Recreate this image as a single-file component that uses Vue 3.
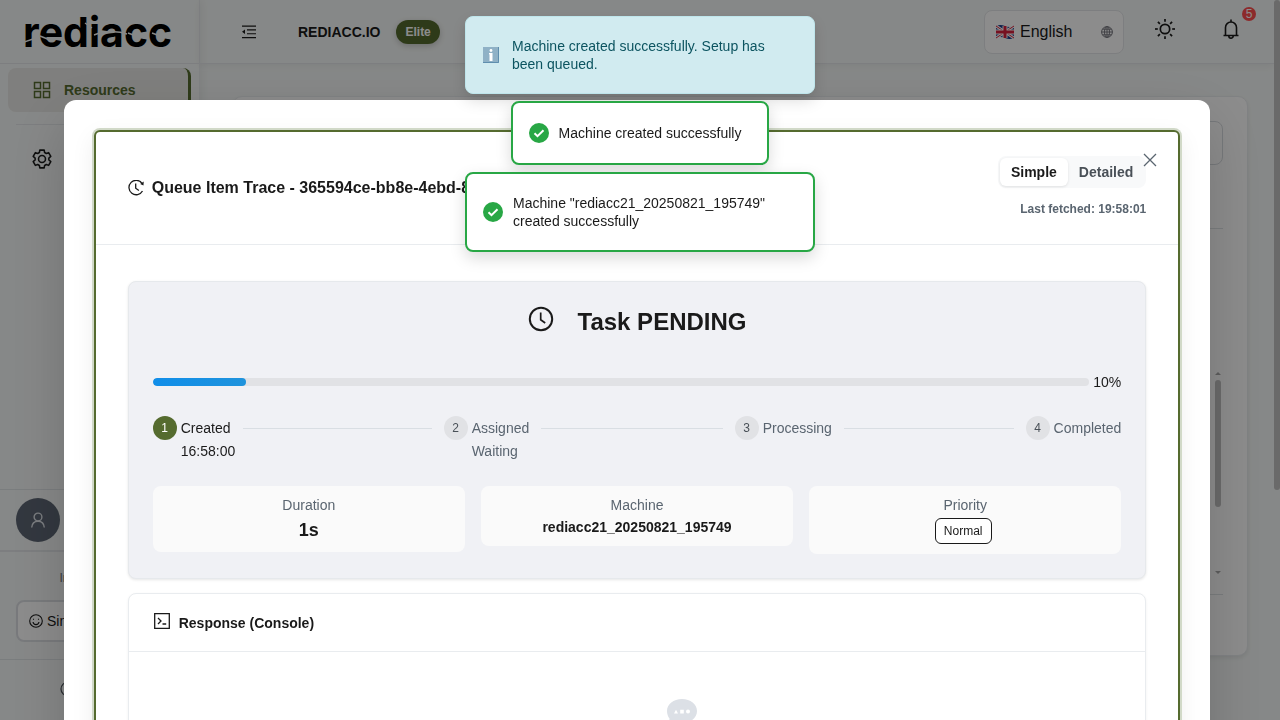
<script setup>
import { ref } from 'vue'

const view = ref('Simple')
const progress = 10
const steps = [
  { title: 'Created', note: '16:58:00', active: true },
  { title: 'Assigned', note: 'Waiting' },
  { title: 'Processing' },
  { title: 'Completed' },
]
const rays = [0, 45, 90, 135, 180, 225, 270, 315]
</script>

<template>
  <div class="shell">
    <aside class="sidebar">
      <div class="brand">
        <span class="wordmark">rediacc</span>
        <svg class="cuts" viewBox="0 0 152 34" width="152" height="34" aria-hidden="true">
          <path d="M-1 27l9-3M15 21l10 4M60 8l7 5M69 20l8-3M80 18q10-3 22 1M103 18l8 3M127 18l8 3" />
        </svg>
      </div>
      <nav class="nav">
        <a class="item current" href="#resources">
          <svg width="18" height="18" viewBox="0 0 18 18" fill="none" stroke="currentColor" stroke-width="1.5"><path d="M1.5 1.5h6v6h-6zM10.500 1.500h6v6h-6zM1.500 10.500h6v6h-6zM10.500 10.500h6v6h-6z" /></svg>
          <span>Resources</span>
        </a>
        <hr />
        <a class="item" href="#settings" aria-label="Settings">
          <svg width="22" height="22" viewBox="0 0 24 24" fill="none" stroke="currentColor" stroke-width="1.7" stroke-linejoin="round"><path d="M9.600 2.300H14.400L14.850 4.950L16.700 6L19.200 5.050L21.600 9.240L19.500 10.940V13.060L21.600 14.760L19.200 18.950L16.700 18L14.850 19.050L14.400 21.700H9.600L9.150 19.050L7.300 18L4.800 18.950L2.400 14.760L4.500 13.060V10.940L2.400 9.240L4.800 5.050L7.300 6L9.150 4.950Z" /><circle cx="12" cy="12" r="3.800" /></svg>
        </a>
      </nav>
      <div class="account">
        <span class="avatar">
          <svg width="18" height="18" viewBox="0 0 18 18" fill="none" stroke="currentColor" stroke-width="1.400"><circle cx="9" cy="6" r="3.900" /><path d="M2.700 16.500c.3-3.700 2.800-6.200 6.300-6.200s6 2.500 6.300 6.200" /></svg>
        </span>
      </div>
      <div class="mode">
        <span class="mode-label">Interface Mode</span>
        <button class="mode-button" type="button">
          <svg width="14" height="14" viewBox="0 0 14 14" fill="none" stroke="currentColor" stroke-width="1.100"><circle cx="7" cy="7" r="6.300" /><path d="M4 8c.5 3.500 5.500 3.500 6 0M4.500 4.800v1M9.500 4.800v1" /></svg>
          Simple
        </button>
      </div>
      <div class="help">
        <svg width="16" height="16" viewBox="0 0 16 16" fill="none" stroke="currentColor" stroke-width="1.200"><circle cx="8" cy="8" r="7" /></svg>
      </div>
    </aside>

    <div class="main">
      <header class="topbar">
        <button class="bare fold" type="button" aria-label="Collapse menu">
          <svg width="16" height="14" viewBox="0 0 16 14"><path d="M1 0.500h14v1.200H1zM6 4.300h9v1.100H6zM6 8.200h9v1.100H6zM1 12h14v1.200H1zM4 4.600v4.400L1 6.800z" fill="currentColor" /></svg>
        </button>
        <strong class="org">REDIACC.IO</strong>
        <span class="plan">Elite</span>
        <label class="language">
          <svg width="20" height="16" viewBox="0 0 20 16" aria-hidden="true">
            <path d="M1 2q4-2 9 0t9 0v12q-4 2-9 0t-9 0z" fill="#1d3b8b" />
            <path d="M1 2l18 12M19 2L1 14" stroke="#fff" stroke-width="3" />
            <path d="M1 2l18 12M19 2L1 14" stroke="#d8203c" stroke-width="1" />
            <path d="M10 2v12M1 8h18" stroke="#fff" stroke-width="5" />
            <path d="M10 2v12M1 8h18" stroke="#d8203c" stroke-width="3" />
          </svg>
          <select aria-label="Language"><option>English</option></select>
          <svg width="12" height="12" viewBox="0 0 12 12" fill="none" stroke="#77777f" stroke-width="1"><circle cx="6" cy="6" r="5.400" /><ellipse cx="6" cy="6" rx="2.500" ry="5.400" /><path d="M.6 6h10.800M1.500 3.200h9M1.500 8.800h9M6 .6v10.800" /></svg>
        </label>
        <button class="bare sun" type="button" aria-label="Toggle theme">
          <svg width="20" height="20" viewBox="0 0 20 20" fill="none" stroke="currentColor" stroke-width="1.700"><circle cx="10" cy="10" r="4.700" /><path v-for="r in rays" :key="r" d="M10 0v2.800" :transform="`rotate(${r} 10 10)`" /></svg>
        </button>
        <button class="bare bell" type="button" aria-label="Notifications">
          <svg width="18" height="20" viewBox="0 0 18 20" fill="none" stroke="currentColor" stroke-width="1.600"><path d="M1.500 16.500h15M3.500 16.500V8.500a5.500 5.500 0 0 1 11 0v8M9 .5V3M6.800 17a2.200 2.200 0 0 0 4.400 0" /></svg>
          <span class="badge">5</span>
        </button>
      </header>
      <main class="content">
        <section class="board">
          <div class="field"></div>
          <div class="rule"></div>
          <div class="list"><span class="arrow up"></span><span class="thumb"></span><span class="arrow down"></span></div>
        </section>
      </main>
    </div>
    <div class="page-scroll"><span></span></div>
  </div>

  <div class="mask">
    <div class="modal" role="dialog" aria-modal="true" aria-labelledby="trace-title">
      <div class="panel">
        <header class="panel-head">
          <svg class="trace-icon" width="16" height="16" viewBox="0 0 16 16" fill="none" stroke="currentColor" stroke-width="1.300"><path d="M14 3.300A7.200 7.200 0 1 0 14.500 11M7.700 3.500v4.700l3.200 2.300" /><path d="M15.700 1.500l-.2 4-3.300-1.500z" fill="currentColor" stroke="none" /></svg>
          <h1 id="trace-title">Queue Item Trace - 365594ce-bb8e-4ebd-8</h1>
          <div class="head-right">
            <div class="segmented" role="radiogroup" aria-label="View">
              <label v-for="v in ['Simple', 'Detailed']" :key="v" :class="{ on: view === v }">
                <input v-model="view" type="radio" name="view" :value="v" />{{ v }}
              </label>
            </div>
            <span class="fetched">Last fetched: 19:58:01</span>
          </div>
          <button class="close" type="button" aria-label="Close">
            <svg width="14" height="14" viewBox="0 0 14 14" fill="none" stroke="currentColor" stroke-width="1.300"><path d="M1 1l12 12M13 1L1 13" /></svg>
          </button>
        </header>

        <div class="panel-body">
          <section class="summary">
            <h2>
              <svg width="26" height="26" viewBox="0 0 26 26" fill="none" stroke="currentColor" stroke-width="2"><circle cx="13" cy="13" r="11.200" /><path d="M12.700 6.500v7.300l4.500 3.200" stroke-width="1.700" /></svg>
              <span>Task PENDING</span>
            </h2>
            <div class="progress">
              <div class="track" role="progressbar" aria-label="Task progress" :aria-valuenow="progress" aria-valuemin="0" aria-valuemax="100">
                <div class="bar" :style="{ width: progress + '%' }"></div>
              </div>
              <span>{{ progress }}%</span>
            </div>
            <ol class="steps">
              <li v-for="(s, i) in steps" :key="s.title" :class="{ active: s.active }">
                <span class="dot">{{ i + 1 }}</span>
                <div class="step-text">
                  <div class="step-title">{{ s.title }}</div>
                  <div v-if="s.note">{{ s.note }}</div>
                </div>
              </li>
            </ol>
            <div class="stats">
              <div class="stat"><span>Duration</span><strong class="big">1s</strong></div>
              <div class="stat"><span>Machine</span><strong>rediacc21_20250821_195749</strong></div>
              <div class="stat"><span>Priority</span><span class="tag">Normal</span></div>
            </div>
          </section>

          <section class="console">
            <h3>
              <svg width="16" height="16" viewBox="0 0 16 16" fill="none" stroke="currentColor" stroke-width="1.300"><path d="M.7.7h14.600v14.600H.7zM4 5l3 3-3 3M8.500 11h3.700" /></svg>
              Response (Console)
            </h3>
            <div class="console-body">
              <svg width="64" height="41" viewBox="0 0 64 41">
                <path d="M47 0c8.500 0 15 5 15 12s-6.500 12-15 12c-2.800 0-5.500-.6-7.700-1.600L34 25l.5-5.500C32.900 17.500 32 14.800 32 12 32 5 38.500 0 47 0z" fill="#dce0e6" />
                <path d="M39 14.500l2-3.700 2 3.700zM45.200 10.800h3.600v3.600h-3.600z" fill="#fff" /><circle cx="53" cy="12.600" r="2" fill="#fff" />
              </svg>
            </div>
          </section>
        </div>
      </div>
    </div>
  </div>

  <div class="toasts" aria-live="polite">
    <div class="toast info">
      <svg width="20" height="20" viewBox="0 0 20 20"><path d="M1 2h16v16H1z" fill="#8fb1c6" /><path d="M1 17.500h15.500V2" fill="none" stroke="#5f8eae" stroke-width="1" /><path d="M7 8h3.500v8H7.500V9.300H7z" fill="#fff" /><circle cx="9" cy="5.500" r="1.400" fill="#fff" /></svg>
      <span>Machine created successfully. Setup has been queued.</span>
    </div>
    <div v-for="m in ['Machine created successfully', 'Machine &quot;rediacc21_20250821_195749&quot; created successfully']" :key="m" class="toast success">
      <svg width="20" height="20" viewBox="0 0 20 20"><circle cx="10" cy="10" r="10" fill="#28a745" /><path d="M5.500 10.200l3 3 6-6" fill="none" stroke="#fff" stroke-width="2" /></svg>
      <span>{{ m }}</span>
    </div>
  </div>
</template>

<style>
body { margin: 0; overflow: hidden; }
</style>

<style scoped>
* { box-sizing: border-box; }
.shell, .mask, .toasts { font-family: "Liberation Sans", Arial, sans-serif; font-size: 14px; color: #1a1a1a; }
button { font: inherit; color: inherit; cursor: pointer; }
svg { flex: none; }
.shell { display: flex; height: 100vh; background: #f5f8f7; overflow: hidden; }
.sidebar { width: 200px; flex: none; display: flex; flex-direction: column; border-right: 1px solid #e9ecef; box-shadow: 2px 0 8px rgba(0,0,0,.06); }
.brand { position: relative; height: 64px; flex: none; border-bottom: 1px solid #e3e6e9; padding: 8px 0 0 23px; overflow: hidden; }
.wordmark { font: 700 41px/48px Inter, sans-serif; color: #000; }
.cuts { position: absolute; left: 25px; top: 15px; fill: none; stroke: #f5f8f7; stroke-width: 1.400; }
.nav { flex: 1; padding: 4px 8px; }
.item { display: flex; align-items: center; gap: 13px; height: 44px; padding-left: 23px; color: #1a1a1a; text-decoration: none; border-radius: 8px; }
.item.current { padding-left: 25px; color: #556b2f; font-weight: 700; background: #e8e8e5; border-right: 3px solid #556b2f; }
.nav hr { margin: 12px 8px; border: 0; border-top: 1px solid #e3e6e9; }
.account { height: 63px; padding: 8px 16px; border-top: 1px solid #dfe3e6; border-bottom: 2px solid #e3e6e9; }
.avatar { display: flex; align-items: center; justify-content: center; width: 44px; height: 44px; border-radius: 50%; background: #5d6674; color: #dfe3e8; }
.mode { display: flex; flex-direction: column; height: 107px; padding: 17px 16px; gap: 13px; text-align: center; color: #6c757d; font-size: 14px; line-height: 18px; }
.mode-label { font-size: 12px; }
.mode-button { display: flex; align-items: center; gap: 4px; height: 44px; padding: 0 11px; background: #fff; border: 2px solid #dcdfe3; border-radius: 8px; color: #1a1a1a; }
.help { height: 61px; border-top: 1px solid #dfe3e6; padding: 21px 60px; color: #495057; }
.main { flex: 1; min-width: 0; display: flex; flex-direction: column; }
.topbar { display: flex; align-items: center; height: 64px; flex: none; padding: 0 18px 0 41px; border-bottom: 1px solid #e3e6e9; box-shadow: 0 2px 8px rgba(0,0,0,.06); }
.bare { display: flex; padding: 0; border: 0; background: none; }
.org { margin-left: 41px; }
.plan { margin-left: 16px; padding: 0 9px; line-height: 24px; border-radius: 12px; background: #556b2f; color: #fff; font-size: 12px; font-weight: 700; box-shadow: 0 2px 6px rgba(0,0,0,.2); }
.language { display: flex; align-items: center; gap: 5px; width: 140px; height: 44px; margin-left: auto; padding: 0 10px; background: #fff; border: 1px solid #e3e6e9; border-radius: 8px; }
.language select { flex: 1; min-width: 0; padding: 0; appearance: none; border: 0; background: none; font: inherit; font-size: 16px; color: inherit; }
.sun { margin: -6px 0 0 31px; }
.bell { position: relative; margin: -6px 0 0 47px; padding-right: 16px; }
.badge { position: absolute; right: 0; top: -12px; width: 14px; height: 14px; border-radius: 50%; background: #ff4d4f; color: #fff; font-size: 12px; line-height: 14px; text-align: center; }
.content { padding: 32px 26px 0 32px; }
.board { height: 560px; padding: 24px; background: #fff; border: 1px solid #e9ecef; border-radius: 10px; box-shadow: 0 2px 4px rgba(0,0,0,.08); }
.field { height: 44px; border: 1px solid #d8dce0; border-radius: 8px; }
.rule { height: 64px; border-bottom: 1px solid #dfe3e6; }
.list { display: flex; flex-direction: column; align-items: flex-end; height: 366px; padding: 143px 2px 20px; border-bottom: 1px solid #dfe3e6; }
.arrow { border: 3px solid transparent; }
.up { border-top: 0; border-bottom-color: #aaa; }
.down { border-bottom: 0; border-top-color: #aaa; margin-top: auto; }
.thumb { width: 6px; height: 127px; margin-top: 5px; border-radius: 3px; background: #c1c1c1; }
.page-scroll { width: 6px; flex: none; background: #f5f8f7; }
.page-scroll span { display: block; height: 68%; border-radius: 3px; background: #c1c1c1; }
.mask { position: fixed; inset: 0; display: flex; justify-content: center; align-items: flex-start; padding: 100px 6px 0 0; background: rgba(0,0,0,.45); overflow: hidden; }
.modal { width: 90%; padding: 30px; background: #fff; border-radius: 12px; box-shadow: 0 20px 60px rgba(0,0,0,.18); }
.panel { border: 2px solid #556b2f; border-radius: 6px; background: #fff; box-shadow: 0 0 0 2px #d1d9c8, 0 8px 24px rgba(0,0,0,.08); }
.panel-head { position: relative; display: flex; align-items: center; gap: 8px; height: 113px; padding: 0 32px; border-bottom: 1px solid #e9ecef; }
h1, h2, h3 { margin: 0; font-weight: 700; }
h1 { font-size: 16px; line-height: 24px; white-space: nowrap; }
.head-right { display: flex; flex-direction: column; align-items: flex-end; gap: 14px; margin-left: auto; padding-bottom: 4px; }
.segmented { display: flex; padding: 2px; border-radius: 8px; background: #f8f9fa; font-weight: 700; color: #495057; }
.segmented label { position: relative; padding: 0 11px; line-height: 28px; border-radius: 6px; cursor: pointer; }
.segmented .on { background: #fff; color: #1a1a1a; box-shadow: 0 1px 3px rgba(0,0,0,.1); }
.segmented input { position: absolute; inset: 0; margin: 0; opacity: 0; }
.fetched { font-size: 12px; line-height: 14px; font-weight: 700; color: #5a6570; }
.close { position: absolute; right: 13px; top: 13px; display: flex; padding: 8px; border: 0; background: none; color: #5a6570; }
.panel-body { padding: 36px 32px; }
.summary { padding: 24px; background: #f0f1f5; border: 1px solid #e6e9ec; border-radius: 8px; box-shadow: 0 1px 3px rgba(0,0,0,.1); }
h2 { display: flex; justify-content: center; align-items: center; gap: 24px; font-size: 24px; line-height: 32px; }
h2 svg { margin-bottom: 6px; }
.progress { display: flex; align-items: center; gap: 4px; margin-top: 33px; line-height: 22px; margin-bottom: 23px; }
.track { flex: 1; height: 8px; border-radius: 4px; background: #e1e2e5; overflow: hidden; }
.bar { height: 100%; border-radius: 4px; background: linear-gradient(90deg, #108ee9, #1f93dc); }
.steps { display: flex; gap: 12px; margin: 0; padding: 0; list-style: none; color: #5a6570; height: 70px; }
.steps li { flex: 1; display: flex; gap: 4px; }
.steps li:last-child { flex: none; }
.dot { flex: none; width: 24px; height: 24px; border-radius: 50%; background: #e1e2e5; color: #495057; font-size: 12px; line-height: 25px; text-align: center; }
.step-text { flex: 1; line-height: 22px; }
.step-title { display: flex; align-items: center; gap: 12px; line-height: 24px; }
li:not(:last-child) .step-title::after { content: ""; flex: 1; height: 1px; background: #d9dee3; }
.steps .active { color: #1a1a1a; }
.active .dot { background: #556b2f; color: #fff; }
.stats { display: grid; grid-template-columns: repeat(3, 1fr); align-items: start; gap: 16px; }
.stat { display: flex; flex-direction: column; align-items: center; padding: 8px; border-radius: 8px; background: #fafafa; color: #5a6570; line-height: 22px; }
.stat strong { color: #1a1a1a; }
.stat .big { font-size: 18px; line-height: 28px; }
.tag { margin: 2px 4px 2px 0; padding: 0 8px; border: 1px solid #1a1a1a; border-radius: 6px; background: #fff; color: #1a1a1a; font-size: 12px; line-height: 24px; }
.console { margin-top: 14px; border: 1px solid #e9ecef; border-radius: 8px; background: #fff; box-shadow: 0 1px 3px rgba(0,0,0,.06); }
h3 { display: flex; align-items: center; gap: 9px; height: 58px; padding: 0 25px; border-bottom: 1px solid #e9ecef; font-size: 14px; }
h3 svg { margin-bottom: 4px; }
.console-body { display: flex; justify-content: center; height: 220px; padding-top: 47px; padding-left: 60px; }
.toasts { position: fixed; inset: 16px 0 auto; display: flex; flex-direction: column; align-items: center; gap: 7px; pointer-events: none; }
.toast { display: flex; align-items: center; gap: 10px; max-width: 350px; padding: 20px 26px 20px 16px; border: 2px solid #28a745; border-radius: 8px; background: #fff; line-height: 18px; box-shadow: 0 6px 16px rgba(0,0,0,.15); }
.info { border: 1px solid #bee5eb; background: #d1ebf0; color: #0c5460; }
</style>
